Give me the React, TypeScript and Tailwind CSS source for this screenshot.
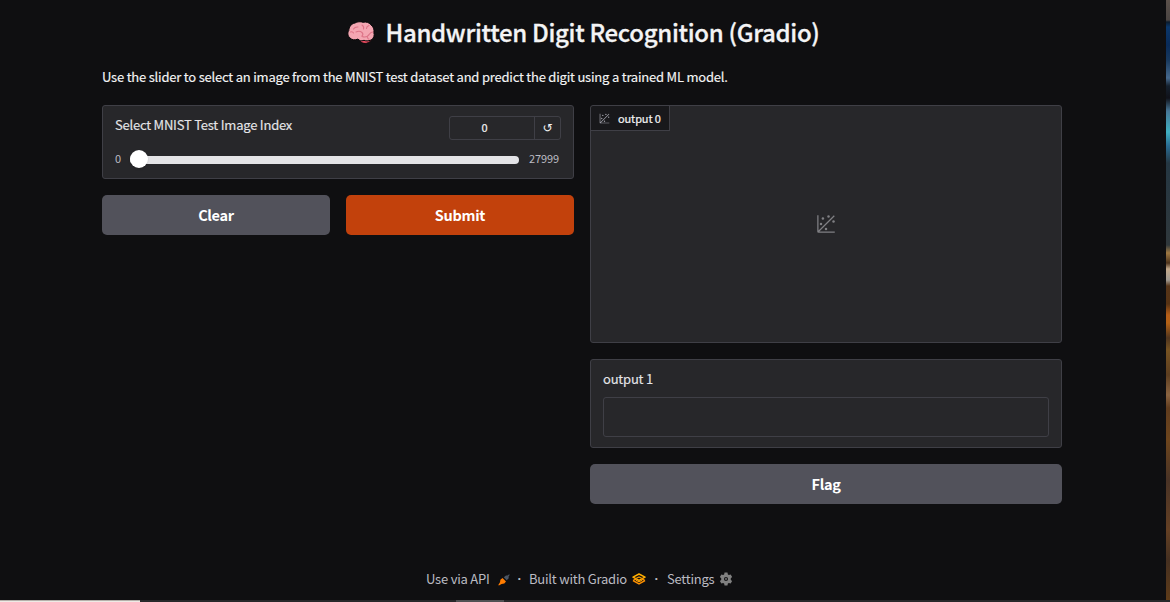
import React from "react";

function PlotIcon({ className }: { className: string }) {
  return (
    <svg viewBox="0 0 32 32" className={className} fill="currentColor">
      <circle cx="20" cy="4" r="2" />
      <circle cx="8" cy="16" r="2" />
      <circle cx="28" cy="12" r="2" />
      <circle cx="11" cy="7" r="2" />
      <circle cx="16" cy="24" r="2" />
      <path d="M30 3.413L28.586 2L4 26.585V2H2v26a2 2 0 0 0 2 2h26v-2H5.413Z" />
    </svg>
  );
}

function Brain() {
  return (
    <svg viewBox="0 0 28 24" className="h-6 w-7 shrink-0">
      <path d="M12 17.500c.5 3.500 4 5.500 7.500 4.800c3-.7 5.500-2.500 5.500-5.800z" fill="#e84a5f" stroke="#070708" strokeWidth="1" />
      <path
        d="M3 17C.5 15 .4 11.500 1.800 9.500C1.800 6 4.500 2.500 8 2C10 .5 14 .4 16 1.300C19.500 .6 22 1.500 23.500 3.500C26.500 5.500 27.500 8.500 26.800 11.500C27.800 14 26.800 17 24.800 18.500C23 20 19 20.300 17 19.300C14 20.500 12 19.500 11 18C8 19.500 5 19 3 17Z"
        fill="#f4a6b2"
        stroke="#070708"
        strokeWidth="1"
      />
      <path
        d="M11 6c-2-.3-3.500.5-4.500 2M9 11c2-1 4.500-.8 6 .5c1 1 1 2.500 0 3.500M15 4c1.500 1 2 2.500 1.500 4M22 4.500c-1.500.5-2.500 1.500-2.500 3M3.500 11c1.500-.5 2.500 0 3 1M26 11c-1.500 0-2.500.5-3.500 2c-1.500 2.500-4.500 3.500-7.500 2.500M20.500 16c0 1.200.5 2 1.500 2.300"
        fill="none"
        stroke="#dd7488"
        strokeWidth="1.1"
        strokeLinecap="round"
      />
    </svg>
  );
}

function Plug() {
  return (
    <svg viewBox="0 0 12 12" className="relative top-px h-3 w-3 shrink-0">
      <path d="M5.800 3.200L8 1.400L9.500 1.600L11.200.3L11.700.9L10.600 2.500L10.700 4.200L8.700 6.200Z" fill="#4b5563" />
      <path d="M4.500 4L8 7.500L6.300 9.500L3.600 9.900L.9 11.600L.3 11L2 8.300L2.400 5.700Z" fill="#ff7c00" />
    </svg>
  );
}

function GradioLogo() {
  return (
    <svg viewBox="0 0 14 12" className="h-3 w-3.5 shrink-0" fill="none" strokeLinejoin="round">
      <path d="M1 4.200L7 1L13 4.200L7 7.400Z" stroke="#ffae00" strokeWidth="1.5" />
      <path d="M1 7.600L7 10.900L13 7.600M1 7.600L4 6M13 7.600L10 6" stroke="#ff9000" strokeWidth="1.5" />
      <path d="M4.300 5.300L7 4L9.700 5.300M4 7.300L7 8.700L10 7.300" stroke="#ff9d00" strokeWidth="1.100" />
    </svg>
  );
}

function Gear() {
  return (
    <svg viewBox="0 0 24 24" className="h-3.5 w-3.5 shrink-0" fill="#808080">
      <path d="M9.500 1h5l.7 3.100 1.800 1 3-1 2.500 4.300L20.200 10.500v3l2.300 2.100-2.500 4.300-3-1-1.800 1-.7 3.100h-5l-.7-3.100-1.800-1-3 1-2.500-4.300 2.300-2.100v-3L1.500 8.400 4 4.100l3 1 1.800-1zM12 8.500a3.500 3.500 0 1 0 0 7a3.500 3.500 0 0 0 0-7z" fillRule="evenodd" />
      <circle cx="12" cy="12" r="2" fill="#606060" />
    </svg>
  );
}

function Dot({ className }: { className: string }) {
  return <span className={`flex shrink-0 justify-center font-['Liberation_Sans',sans-serif] font-bold ${className}`}>·</span>;
}

const panel = "rounded-[3px] border border-[#3f3f46] bg-[#27272a]";
const button =
  "flex h-10 items-center justify-center rounded-[5px] pb-px text-[14.5px] font-bold leading-5 tracking-[-0.3px] text-white";

export default function App() {
  return (
    <div className="flex h-[602px] w-[1170px] flex-col overflow-hidden bg-[#0f0f11] font-['Noto_Sans_CJK_SC',sans-serif] text-[#f4f4f5]">
      <div className="flex h-[600px]">
        <main className="flex w-[1166px] shrink-0 flex-col pl-[102px] pr-[104px]">
          <h1 className="mt-[17px] flex h-8 items-center justify-center gap-2.5 pl-[3px] text-[24px] font-medium leading-8 tracking-[-0.32px] [-webkit-text-stroke:0.3px_#f4f4f5]">
            <Brain />
            <span className="-mt-0.5">Handwritten Digit Recognition (Gradio)</span>
          </h1>
          <p className="mt-[18px] h-5 whitespace-nowrap text-[13px] leading-5 tracking-[-0.212px] [-webkit-text-stroke:0.15px_#f4f4f5]">
            Use the slider to select an image from the MNIST test dataset and predict the digit using a trained ML model.
          </p>
          <div className="mt-[18px] grid grid-cols-2 items-start gap-4">
            <section className="flex flex-col gap-4">
              <div className={`h-[74px] px-3 ${panel}`}>
                <div className="flex h-[34px] justify-between pt-[10px]">
                  <label className="-mt-px text-[13px] leading-[19px] tracking-[-0.22px] text-[#e4e4e7] [-webkit-text-stroke:0.15px_#e4e4e7]">Select MNIST Test Image Index</label>
                  <div className="flex h-6 w-28 rounded-[3px] border border-[#3f3f46] text-[11px]">
                    <span className="w-[85px] border-r border-[#3f3f46] pr-[15px] text-center leading-[21px] [-webkit-text-stroke:0.2px_#f4f4f5]">0</span>
                    <span className="flex flex-1 items-center justify-center font-['DejaVu_Sans',sans-serif] text-[12px]">↺</span>
                  </div>
                </div>
                <div className="mt-[10px] flex h-[18px] items-center text-[11px] leading-4 text-[#bbbbc2]">
                  <span className="-mt-[3px] w-[15px]">0</span>
                  <div className="mt-px flex h-2 w-[389px] items-center rounded-full bg-[#e4e4e7]">
                    <span className="-mt-px h-[18px] w-[18px] shrink-0 rounded-full bg-white shadow" />
                  </div>
                  <span className="-mt-[3px] pl-[10px] tracking-[-0.1px]">27999</span>
                </div>
              </div>
              <div className="grid grid-cols-2 gap-4">
                <button className={`${button} bg-[#52525b]`}>Clear</button>
                <button className={`${button} bg-[#c2410c]`}>Submit</button>
              </div>
            </section>
            <section className="flex flex-col gap-4">
              <div className={`flex h-[238px] flex-col ${panel}`}>
                <div className="flex h-[25px] w-[79px] items-center gap-2 rounded-tl-[3px] border-b border-r border-[#3f3f46] bg-[#18181b] pl-2 text-[11px] leading-5 tracking-[-0.12px]">
                  <PlotIcon className="h-[11px] w-[11px] text-[#a1a1aa]" />
                  <span className="-mt-px [-webkit-text-stroke:0.2px_#f4f4f5]">output 0</span>
                </div>
                <div className="flex flex-1 justify-center pt-[83px] text-[#808084]">
                  <PlotIcon className="h-5 w-5" />
                </div>
              </div>
              <div className={`h-[89px] px-3 pt-[9px] ${panel}`}>
                <div className="h-[28px] text-[13px] leading-5 tracking-[-0.2px] text-[#e4e4e7] [-webkit-text-stroke:0.15px_#e4e4e7]">output 1</div>
                <div className="h-10 rounded-[3px] border border-[#3f3f46]" />
              </div>
              <button className={`${button} bg-[#52525b]`}>Flag</button>
            </section>
          </div>
          <footer className="mt-[65px] flex h-5 items-center whitespace-nowrap pl-[324px] text-[13px] leading-5 tracking-[-0.22px] text-[#bbbbc2]">
            <span className="w-[72px]">Use via API</span>
            <Plug />
            <Dot className="w-[19px]" />
            <span className="w-[103px]">Built with Gradio</span>
            <GradioLogo />
            <Dot className="w-[21px]" />
            <span className="w-[52px]">Settings</span>
            <Gear />
          </footer>
        </main>
        <div className="w-1 bg-[linear-gradient(180deg,#5b514b_0px,#4b4543_20px,#0c1c2c_22px,#0b376b_27px,#092b59_45px,#18395e_60px,#46698d_78px,#15202d_86px,#101119_98px,#477696_111px,#40b0c2_132px,#296b92_146px,#253743_163px,#30383c_245px,#a07943_253px,#4e341d_263px,#c4a98b_269px,#a19a91_280px,#563519_286px,#573314_304px,#b65e18_315px,#b46216_323px,#50351f_338px,#775322_350px,#5d3e20_375px,#8b6441_395px,#603c1e_408px,#6d451d_440px,#493326_480px,#644024_530px,#453021_560px,#5e3b19_600px)]" />
      </div>
      <div className="flex h-0.5 bg-[#27282a]">
        <div className="w-[140px] border-t border-[#b5afaa] bg-[#eeeae5]" />
        <div className="ml-[316px] w-12 bg-[#505153]" />
      </div>
    </div>
  );
}
